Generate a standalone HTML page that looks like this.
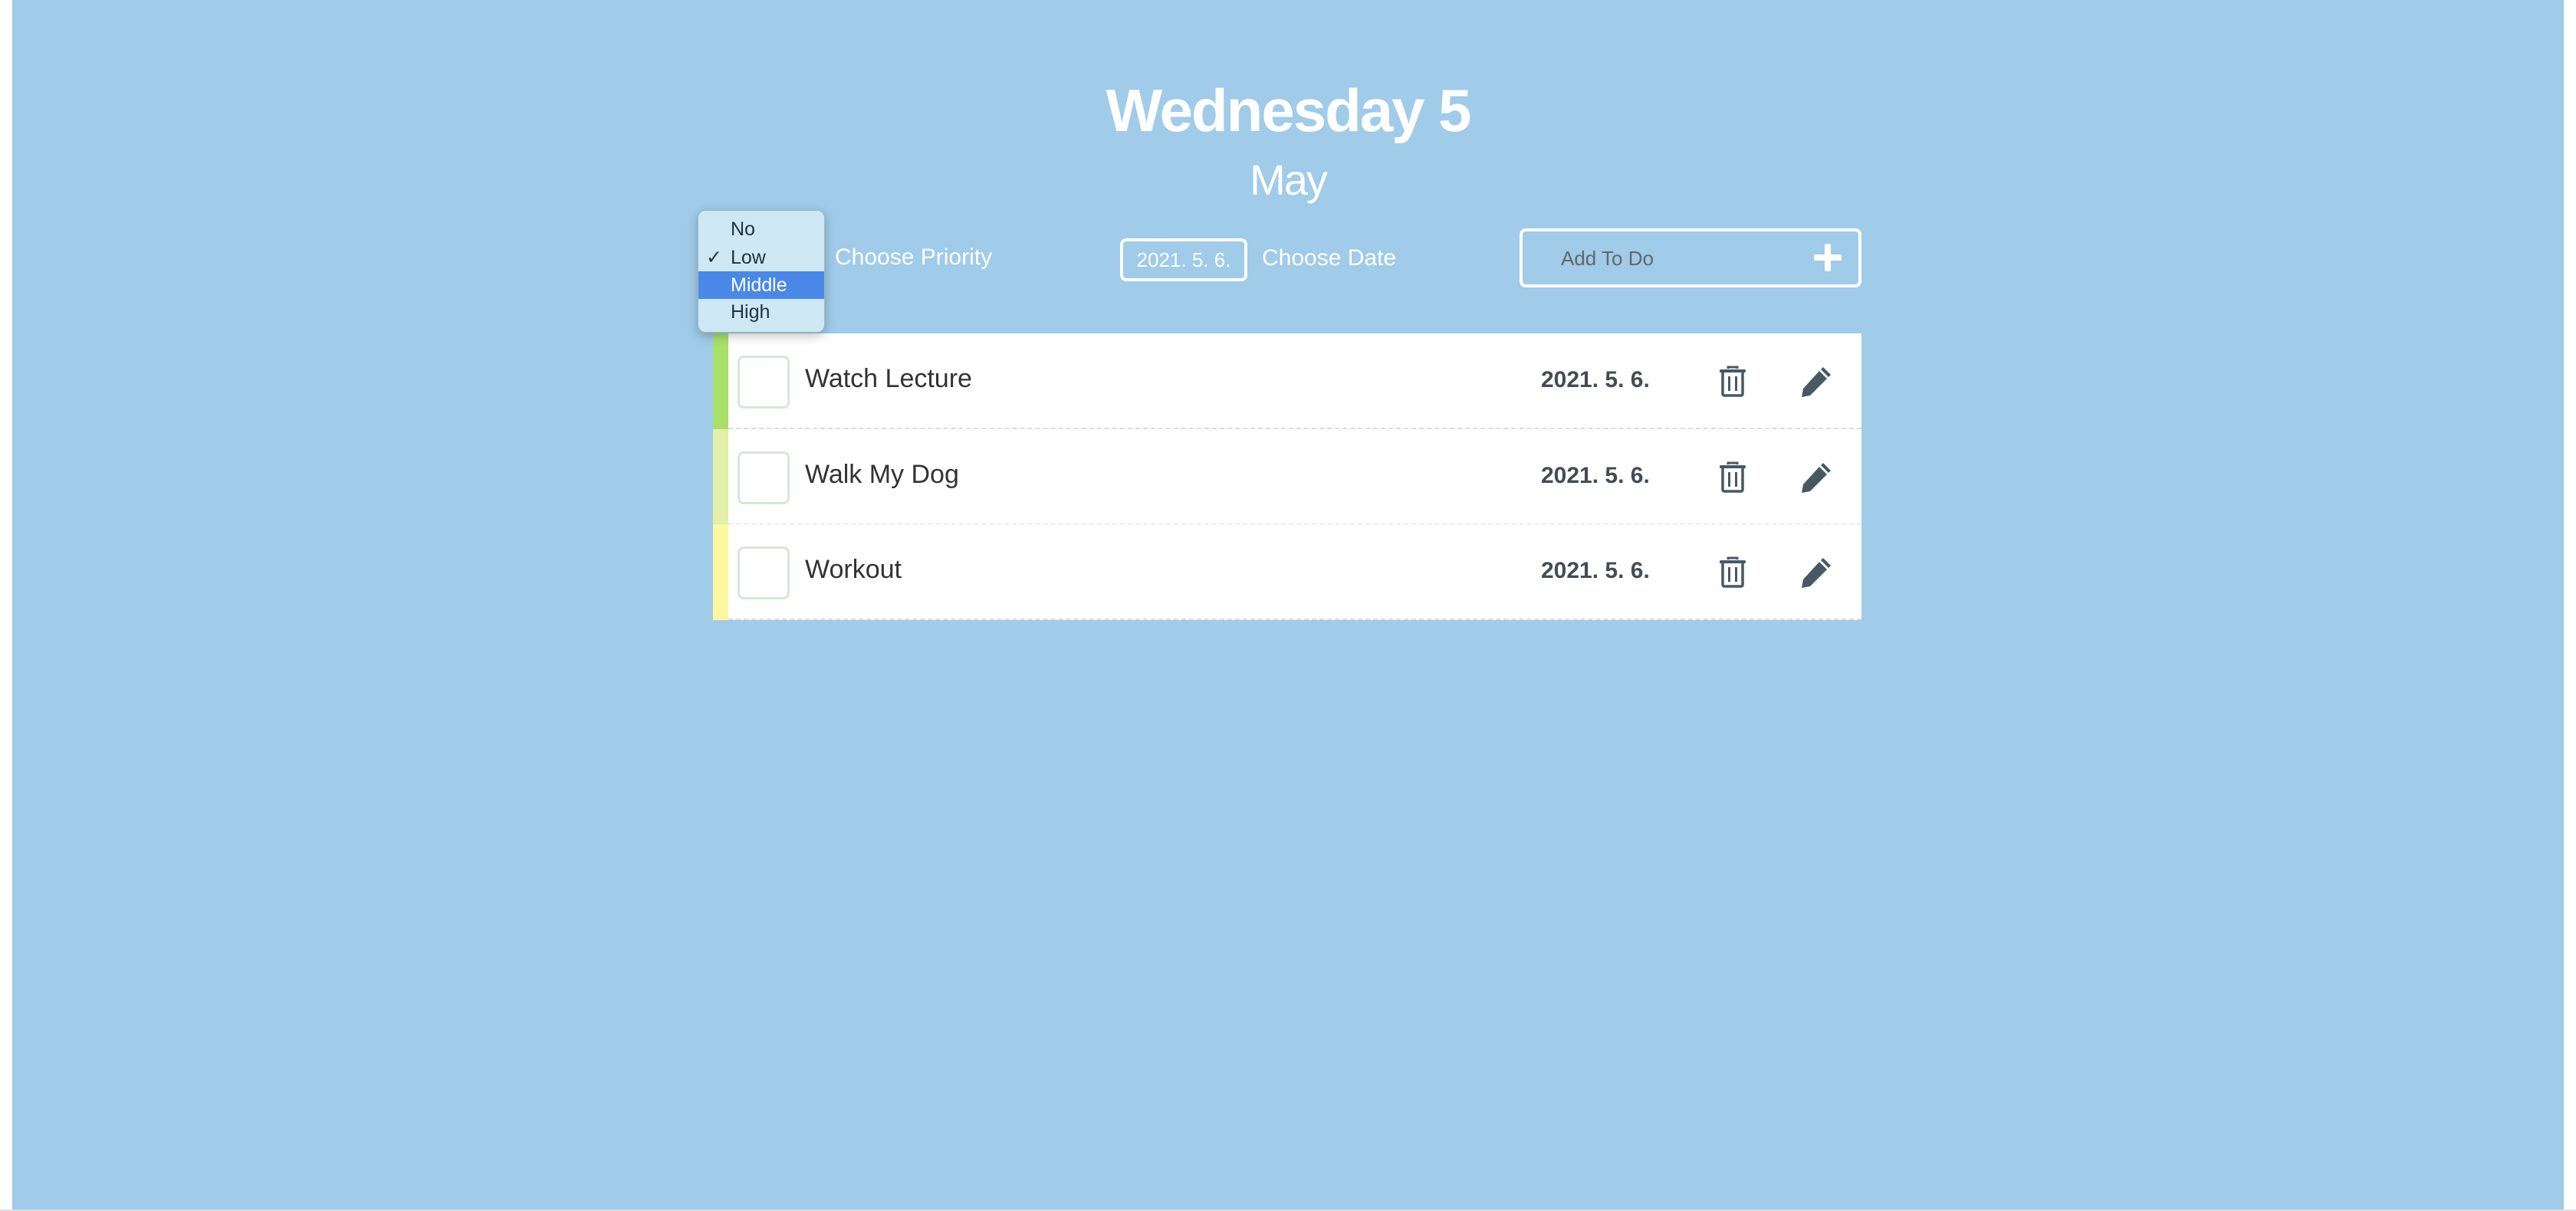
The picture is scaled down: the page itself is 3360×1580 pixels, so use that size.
<!DOCTYPE html>
<html><head><meta charset="utf-8"><style>
html,body{margin:0;padding:0;width:3360px;height:1580px;background:#fff;overflow:hidden;font-family:"Liberation Sans","NanumGothic",sans-serif;}
#bg{position:absolute;left:16px;top:0;width:3328px;height:1578px;background:#a0cbe9;}
#bot{position:absolute;left:0;top:1578px;width:3360px;height:2px;background:#ddd;}
.a{position:absolute;white-space:nowrap;}
.t1{left:0;width:3360px;text-align:center;color:#fff;}
.row{position:absolute;left:930px;width:1498px;height:123px;background:#fff;border-bottom:2px dashed #ddd;}
.bar{position:absolute;left:0;top:0;width:20px;height:125px;}
.cb{position:absolute;left:32px;top:29px;border:3px solid #d6e8d8;border-radius:8px;box-sizing:border-box;width:68px;height:69px;}
.name{position:absolute;left:120px;top:40px;font-size:34px;color:#333;}
.date{position:absolute;left:1080px;top:44px;font-size:30px;font-weight:bold;color:#444c55;}
.tr{position:absolute;left:1312px;top:41px;}
.pe{position:absolute;left:1419px;top:42px;}
.dd{position:absolute;left:910px;top:274px;width:166px;height:160px;background:#cde8f3;border-radius:10px;box-shadow:0 4px 14px rgba(0,0,0,.25);border:1px solid #9bb;box-sizing:border-box;}
.it{position:absolute;left:0;width:164px;height:36px;font-size:25px;color:#1c3440;line-height:36px;padding-left:42px;box-sizing:border-box;}
</style></head><body>
<div id="bg"></div><div id="bot"></div>
<div class="a t1" style="top:94px;font-size:78px;font-weight:bold;letter-spacing:-2px;line-height:100px;">Wednesday 5</div>
<div class="a t1" style="top:200px;font-size:56px;letter-spacing:-2px;line-height:70px;">May</div>

<div class="a" style="left:1089px;top:319px;font-size:30px;color:#fff;">Choose Priority</div>
<div class="a" style="left:1461px;top:311px;width:166px;height:56px;border:4px solid #fff;border-radius:8px;box-sizing:border-box;color:#fff;font-size:26px;line-height:48px;text-align:center;">2021. 5. 6.</div>
<div class="a" style="left:1646px;top:320px;font-size:30px;color:#fff;">Choose Date</div>
<div class="a" style="left:1982px;top:298px;width:446px;height:77px;border:4px solid #fff;border-radius:8px;box-sizing:border-box;"></div>
<div class="a" style="left:2036px;top:322px;font-size:26px;color:#666;">Add To Do</div>
<div class="a" style="left:2366px;top:332px;width:36px;height:8px;background:#fff;border-radius:2px;"></div>
<div class="a" style="left:2380px;top:318px;width:8px;height:36px;background:#fff;border-radius:2px;"></div>

<div class="row" style="top:435px;"><div class="bar" style="background:#a8e06a"></div><div class="cb"></div><div class="name">Watch Lecture</div><div class="date">2021. 5. 6.</div>
<svg class="tr" width="36" height="42" viewBox="0 0 36 42"><path d="M12 5V3h12v2" fill="none" stroke="#475965" stroke-width="3"/><rect x="1" y="6" width="34" height="4" rx="1.5" fill="#475965"/><path d="M5 10v28a2 2 0 0 0 2 2h22a2 2 0 0 0 2-2V10" fill="none" stroke="#475965" stroke-width="3.5"/><rect x="12" y="15" width="3" height="19" fill="#475965"/><rect x="21" y="15" width="3" height="19" fill="#475965"/></svg>
<svg class="pe" width="42" height="42" viewBox="0 0 42 42"><path d="M29 2l10 10-3 3-10-10z" fill="#475965"/><path d="M24 7l10 10L12 39 1 41l2-11z" fill="#475965"/></svg></div>
<div class="row" style="top:560px;"><div class="bar" style="background:#e2f0a8"></div><div class="cb"></div><div class="name">Walk My Dog</div><div class="date">2021. 5. 6.</div>
<svg class="tr" width="36" height="42" viewBox="0 0 36 42"><path d="M12 5V3h12v2" fill="none" stroke="#475965" stroke-width="3"/><rect x="1" y="6" width="34" height="4" rx="1.5" fill="#475965"/><path d="M5 10v28a2 2 0 0 0 2 2h22a2 2 0 0 0 2-2V10" fill="none" stroke="#475965" stroke-width="3.5"/><rect x="12" y="15" width="3" height="19" fill="#475965"/><rect x="21" y="15" width="3" height="19" fill="#475965"/></svg>
<svg class="pe" width="42" height="42" viewBox="0 0 42 42"><path d="M29 2l10 10-3 3-10-10z" fill="#475965"/><path d="M24 7l10 10L12 39 1 41l2-11z" fill="#475965"/></svg></div>
<div class="row" style="top:684px;"><div class="bar" style="background:#fdf7a0"></div><div class="cb"></div><div class="name">Workout</div><div class="date">2021. 5. 6.</div>
<svg class="tr" width="36" height="42" viewBox="0 0 36 42"><path d="M12 5V3h12v2" fill="none" stroke="#475965" stroke-width="3"/><rect x="1" y="6" width="34" height="4" rx="1.5" fill="#475965"/><path d="M5 10v28a2 2 0 0 0 2 2h22a2 2 0 0 0 2-2V10" fill="none" stroke="#475965" stroke-width="3.5"/><rect x="12" y="15" width="3" height="19" fill="#475965"/><rect x="21" y="15" width="3" height="19" fill="#475965"/></svg>
<svg class="pe" width="42" height="42" viewBox="0 0 42 42"><path d="M29 2l10 10-3 3-10-10z" fill="#475965"/><path d="M24 7l10 10L12 39 1 41l2-11z" fill="#475965"/></svg></div>

<div class="dd">
<div class="it" style="top:6px;">No</div>
<div class="it" style="top:43px;"><span style="position:absolute;left:10px;">✓</span>Low</div>
<div class="it" style="top:79px;background:#4a88e8;color:#fff;">Middle</div>
<div class="it" style="top:114px;">High</div>
</div>
</body></html>
